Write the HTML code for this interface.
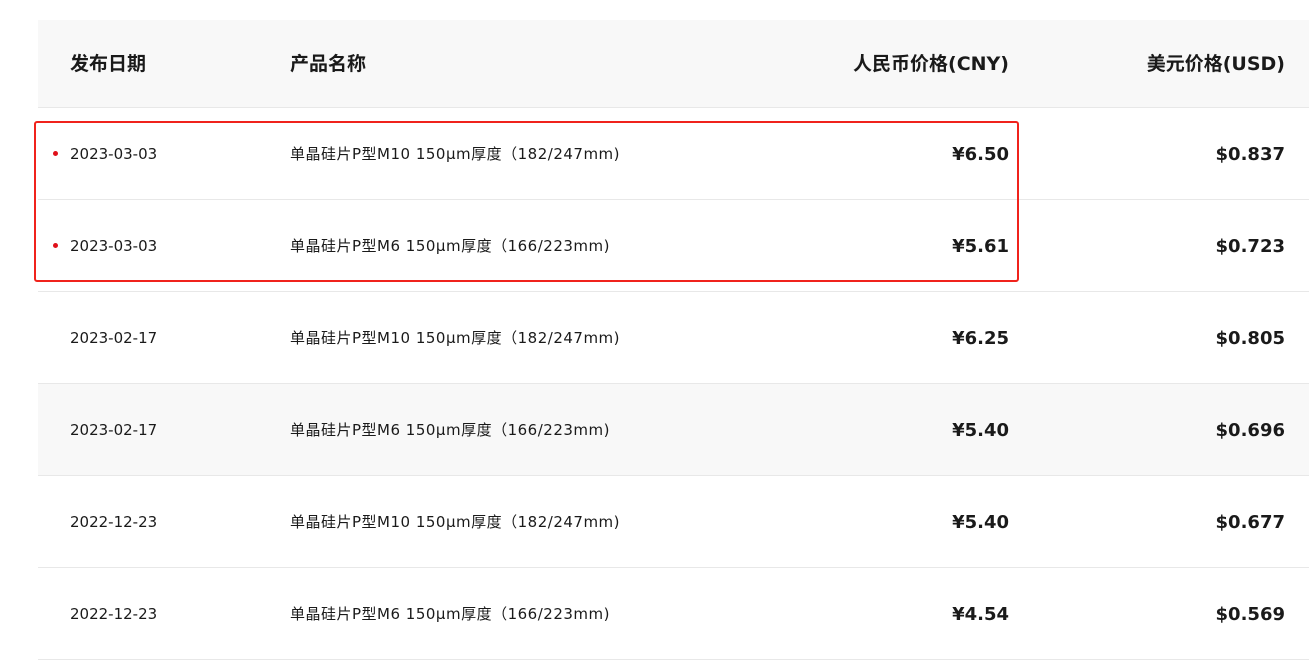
<!DOCTYPE html>
<html><head><meta charset="utf-8"><style>
body{margin:0;width:1309px;height:666px;background:#fff;position:relative;overflow:hidden;font-family:"DejaVu Sans","Noto Sans CJK SC",sans-serif;color:#1a1a1a}
.row{position:absolute;left:38px;width:1271px;height:91px;border-bottom:1px solid #e8e8e8}
.c{position:absolute;top:1px;line-height:91px;white-space:nowrap}
.d{left:32px;font-size:15px}
.p{left:252px;font-size:15px;letter-spacing:0.5px}
.y{right:300px;font-size:18px;font-weight:bold}
.u{right:24px;font-size:18px;font-weight:bold}
.h .c{font-size:19px;font-weight:bold;line-height:88px;top:0;letter-spacing:0}
.dot{position:absolute;left:15px;top:43px;width:5px;height:5px;border-radius:50%;background:#e0101a}
.box{position:absolute;left:34px;top:121px;width:981px;height:157px;border:2px solid #f0231c;border-radius:3px}
</style></head><body>
<div class="row h" style="top:20px;height:87px;background:#f8f8f8"><span class="c d">发布日期</span><span class="c p">产品名称</span><span class="c y">人民币价格(CNY)</span><span class="c u">美元价格(USD)</span></div>
<div class="row" style="top:108px"><div class="dot"></div><span class="c d">2023-03-03</span><span class="c p">单晶硅片P型M10 150μm厚度（182/247mm)</span><span class="c y">¥6.50</span><span class="c u">$0.837</span></div>
<div class="row" style="top:200px"><div class="dot"></div><span class="c d">2023-03-03</span><span class="c p">单晶硅片P型M6 150μm厚度（166/223mm)</span><span class="c y">¥5.61</span><span class="c u">$0.723</span></div>
<div class="row" style="top:292px"><span class="c d">2023-02-17</span><span class="c p">单晶硅片P型M10 150μm厚度（182/247mm)</span><span class="c y">¥6.25</span><span class="c u">$0.805</span></div>
<div class="row" style="top:384px;background:#f8f8f8"><span class="c d">2023-02-17</span><span class="c p">单晶硅片P型M6 150μm厚度（166/223mm)</span><span class="c y">¥5.40</span><span class="c u">$0.696</span></div>
<div class="row" style="top:476px"><span class="c d">2022-12-23</span><span class="c p">单晶硅片P型M10 150μm厚度（182/247mm)</span><span class="c y">¥5.40</span><span class="c u">$0.677</span></div>
<div class="row" style="top:568px"><span class="c d">2022-12-23</span><span class="c p">单晶硅片P型M6 150μm厚度（166/223mm)</span><span class="c y">¥4.54</span><span class="c u">$0.569</span></div>
<div class="box"></div>
</body></html>
